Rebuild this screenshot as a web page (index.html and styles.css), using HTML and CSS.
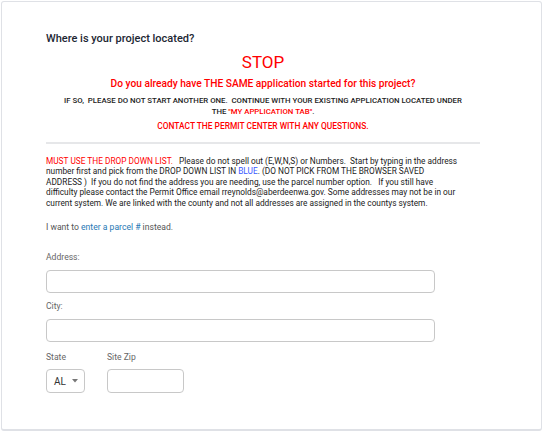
FILE: index.html
```html
<!DOCTYPE html>
<html>
<head>
<meta charset="utf-8">
<link rel="stylesheet" href="styles.css">
</head>
<body>
<div class="card">
  <div class="content">
    <h2 class="title">Where is your project located?</h2>
    <div class="stop">STOP</div>
    <div class="question">Do you already have THE SAME application started for this project?</div>
    <div class="ifso">IF SO,&nbsp; PLEASE DO NOT START ANOTHER ONE.&nbsp; CONTINUE WITH YOUR EXISTING APPLICATION LOCATED UNDER THE <span class="red">"MY APPLICATION TAB"</span>.</div>
    <div class="contact">CONTACT THE PERMIT CENTER WITH ANY QUESTIONS.</div>
    <hr class="divider">
    <p class="notice"><span class="red">MUST USE THE DROP DOWN LIST.</span>&nbsp;&nbsp; Please do not spell out (E,W,N,S) or Numbers.&nbsp; Start by typing in the address<br>number first and pick from the DROP DOWN LIST IN <span class="blue">BLUE</span>. (DO NOT PICK FROM THE BROWSER SAVED<br>ADDRESS )&nbsp; If you do not find the address you are needing, use the parcel number option.&nbsp;&nbsp; If you still have<br>difficulty please contact the Permit Office email rreynolds@aberdeenwa.gov. Some addresses may not be in our<br>current system. We are linked with the county and not all addresses are assigned in the countys system.</p>
    <p class="parcel">I want to <a class="link">enter a parcel #</a> instead.</p>
    <label class="label">Address:</label>
    <div class="input wide"></div>
    <label class="label">City:</label>
    <div class="input wide"></div>
    <div class="row">
      <div class="field">
        <label class="label">State</label>
        <div class="input select"><span>AL</span><svg width="6" height="4" viewBox="0 0 6 4"><path d="M0 0h6L3 3.5z" fill="#777"/></svg></div>
      </div>
      <div class="field">
        <label class="label">Site Zip</label>
        <div class="input zip"></div>
      </div>
    </div>
  </div>
</div>
</body>
</html>
```
FILE: styles.css
```css
* { box-sizing: border-box; }
html, body { margin: 0; padding: 0; background: #fff; }
body { font-family: Roboto, "Liberation Sans", Arial, sans-serif; }
.card {
  margin: 1px 1px 0 1px;
  height: 430px;
  border: 1px solid #dfe1e6;
  border-bottom: 2px solid #dfe1e6;
  border-radius: 3px;
  background: #fff;
  padding: 30px 0 0 44px;
}
.content { width: 434px; }
.title {
  margin: 0;
  font-size: 11px;
  font-weight: 500;
  color: #1d2733;
  line-height: 13px;
}
.stop {
  text-align: center;
  color: #ff0000;
  font-size: 17px;
  line-height: 20px;
  margin-top: 7px;
}
.question {
  text-align: center;
  color: #ff0000;
  font-size: 10.2px;
  font-weight: 500;
  line-height: 13px;
  margin-top: 5px;
}
.ifso {
  text-align: center;
  font-size: 7.8px;
  font-weight: 500;
  color: #222;
  line-height: 10.5px;
  margin: 6px 16px 0 16px;
}
.red { color: #ff0000; }
.blue { color: #3b5bff; }
.contact {
  text-align: center;
  color: #ff0000;
  font-size: 8.4px;
  font-weight: 500;
  line-height: 10px;
  margin-top: 4px;
}
.divider {
  border: 0;
  border-top: 2px solid #e6e7e9;
  margin: 11px 0 0 0;
}
.notice {
  margin: 12px -40px 0 0;
  font-size: 8.3px;
  line-height: 10.4px;
  color: #1a1a1a;
}
.parcel {
  margin: 14px 0 0 0;
  font-size: 8.6px;
  color: #555;
  line-height: 11px;
}
.link { color: #1f77b4; }
.label {
  display: block;
  font-size: 8.6px;
  color: #666;
  line-height: 11px;
  margin-top: 19px;
}
.input {
  border: 1px solid #c8c8c8;
  border-radius: 4px;
  height: 23px;
  margin-top: 7px;
  background: #fff;
}
.input + .label { margin-top: 8px; }
.wide { width: 389px; }
.row { display: flex; gap: 22px; }
.row .label { margin-top: 10px; }
.row .input { margin-top: 6px; height: 24px; }
.select {
  width: 39px;
  display: flex;
  align-items: center;
  justify-content: space-between;
  padding: 0 6px 0 7px;
  font-size: 10px;
  color: #333;
}
.zip { width: 77px; }
```
